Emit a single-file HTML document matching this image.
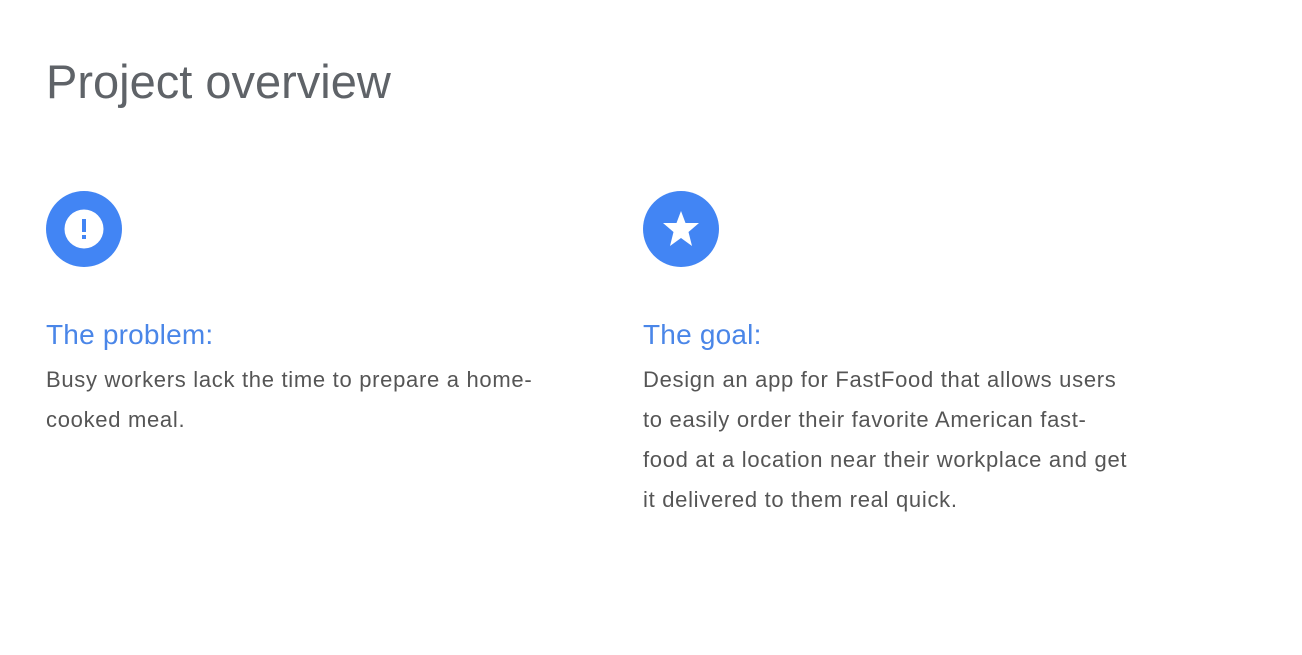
<!DOCTYPE html>
<html><head><meta charset="utf-8"><style>
body{margin:0;width:1302px;height:655px;background:#fff;font-family:"Liberation Sans",sans-serif;position:relative;overflow:hidden}
.t{position:absolute;left:46px;top:54px;font-size:47px;color:#5f6368;white-space:nowrap}
.ic{position:absolute;top:191px;width:76px;height:76px;border-radius:50%;background:#4285f4}
.h{position:absolute;top:319px;font-size:28px;color:#4a86e8;white-space:nowrap;letter-spacing:0.2px}
.b{position:absolute;top:360px;font-size:22px;line-height:40px;color:#555;letter-spacing:0.7px;white-space:nowrap}
</style></head><body>
<div class="t">Project overview</div>
<div class="ic" style="left:46px"><svg width="76" height="76"><circle cx="38" cy="38" r="19.5" fill="#fff"/><rect x="36" y="28" width="4" height="13" fill="#4285f4"/><rect x="36" y="44" width="4" height="4" fill="#4285f4"/></svg></div>
<div class="ic" style="left:643px"><svg width="76" height="76"><polygon points="38,20 42.5,32 56,32 45.5,41 49,55 38,47 27,55 30.5,41 20,32 33.5,32" fill="#fff"/></svg></div>
<div class="h" style="left:46px">The problem:</div>
<div class="h" style="left:643px">The goal:</div>
<div class="b" style="left:46px">Busy workers lack the time to prepare a home-<br>cooked meal.</div>
<div class="b" style="left:643px">Design an app for FastFood that allows users<br>to easily order their favorite American fast-<br>food at a location near their workplace and get<br>it delivered to them real quick.</div>
</body></html>
